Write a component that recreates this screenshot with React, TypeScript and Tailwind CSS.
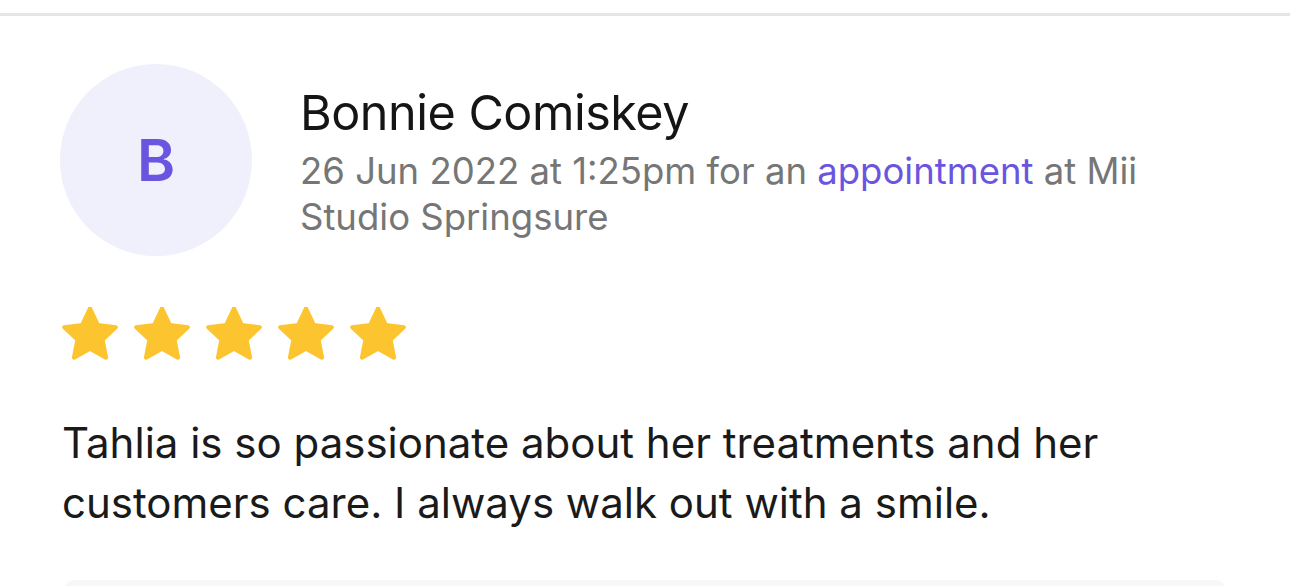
import React from "react";

function Star() {
	return (
		<svg width="56" height="53" viewBox="1.7 2 20.6 19.6" className="shrink-0">
			<path
				d="M12 2.6l2.9 6.1 6.6.8-4.9 4.6 1.3 6.6L12 17.4l-5.9 3.3 1.3-6.6-4.9-4.6 6.6-.8z"
				fill="#fcc52f"
				stroke="#fcc52f"
				strokeWidth="1.6"
				strokeLinejoin="round"
			/>
		</svg>
	);
}

export default function App() {
	return (
		<div
			className="w-[1290px] h-[586px] overflow-hidden bg-white"
			style={{ fontFamily: "Inter, 'Noto Sans', sans-serif" }}
		>
			<div className="pt-[13px]">
				<div className="h-[3px] bg-[#e5e5e5]" />
			</div>
			<div className="pl-[60px] pt-[48px]">
				<div className="flex items-start gap-[48px]">
					<div className="size-[192px] shrink-0 rounded-full bg-[#f0f0fc] flex items-center justify-center">
						<span className="text-[58px] font-semibold text-[#6a55e1]">B</span>
					</div>
					<div className="pt-[20px]">
						<h2 className="text-[48.5px] leading-[58px] text-[#151515] tracking-[-0.01em]">
							Bonnie Comiskey
						</h2>
						<p className="mt-[6px] text-[36.5px] leading-[46px] text-[#767676] w-[900px]">
							26 Jun 2022 at 1:25pm for an{" "}
							<span className="text-[#6a55e1]">appointment</span> at Mii
							<br />
							Studio Springsure
						</p>
					</div>
				</div>
				<div className="mt-[51px] pl-[2px] flex gap-[16px]">
					<Star />
					<Star />
					<Star />
					<Star />
					<Star />
				</div>
				<p className="mt-[53px] pl-[2px] text-[42px] leading-[60px] text-[#1a1a1a] whitespace-nowrap">
					Tahlia is so passionate about her treatments and her
					<br />
					customers care. I always walk out with a smile.
				</p>
			</div>
			<div className="mt-[47px] mx-[62px] h-[40px] rounded-t-[14px] bg-[#f7f7f7]" />
		</div>
	);
}
